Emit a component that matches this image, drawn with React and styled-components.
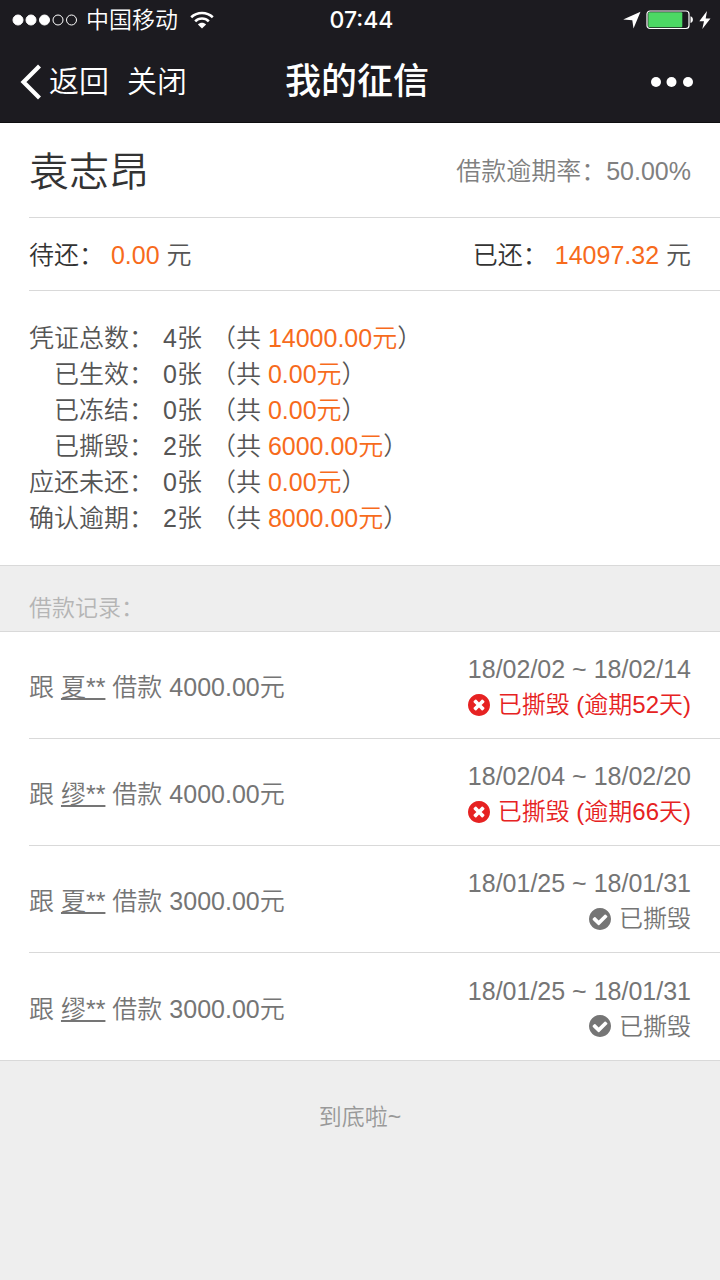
import React from 'react'
import styled, { createGlobalStyle } from 'styled-components'


const GlobalStyle = createGlobalStyle`
  * {
    box-sizing: border-box;
  }
  body {
    margin: 0;
    background: #eeeeee;
    color: #555555;
    font-family: "Liberation Sans", "Noto Sans CJK SC", sans-serif;
    font-size: 25px;
    font-weight: 350;
  }
`

const Header = styled.header`
  background: #1c1b20;
  color: #ffffff;
  border-bottom: 1px solid #0e0e10;
`

const StatusBar = styled.div`
  display: grid;
  grid-template-columns: 1fr auto 1fr;
  align-items: center;
  height: 40px;
  padding: 0 9px 0 12px;
  font-size: 23px;
  line-height: 40px;
`

const StatusSide = styled.div`
  display: flex;
  align-items: center;
  justify-content: ${props => props.$end ? 'flex-end' : 'flex-start'};
  gap: ${props => props.$end ? '5px' : '8px'};
`

const Carrier = styled.span`
  margin-right: 4px;
`

const Clock = styled.time`
  font-family: Inter, sans-serif;
  font-size: 23px;
  font-weight: 500;
`

const NavBar = styled.nav`
  display: grid;
  grid-template-columns: 1fr auto 1fr;
  align-items: center;
  height: 82px;
  padding: 2px 26px 0 20px;
`

const NavActions = styled.div`
  display: flex;
  align-items: center;
  gap: 18px;
`

const NavButton = styled.button`
  display: flex;
  align-items: center;
  justify-self: ${props => props.$end ? 'end' : 'start'};
  gap: 7px;
  padding: 0;
  border: 0;
  background: none;
  color: inherit;
  font: inherit;
  font-size: 30px;
  line-height: 40px;
`

const NavTitle = styled.h1`
  margin: 0;
  font-size: 36px;
  font-weight: 500;
  line-height: 48px;
`

const Panel = styled.section`
  background: #ffffff;
  border-bottom: 1px solid #d9d9d9;
  padding-left: 29px;
`

const PanelRow = styled.div`
  display: flex;
  align-items: center;
  justify-content: space-between;
  height: ${props => props.$tall ? '95px' : '73px'};
  padding: 0 29px 3px 0;
  border-bottom: 1px solid #d9d9d9;
`

const UserName = styled.h2`
  margin: 0;
  color: #333333;
  font-size: 40px;
  font-weight: inherit;
`

const OverdueRate = styled.span`
  color: #808080;
`

const Label = styled.span`
  color: #333333;
`

const Amount = styled.span`
  color: #f76b1c;
`

const Summary = styled.table`
  margin: 29px 0;
  border-collapse: collapse;
`

const SummaryLabel = styled.th`
  padding: 0;
  font-weight: inherit;
  line-height: 36px;
  text-align: right;
`

const SummaryCell = styled.td`
  padding: 0 0 0 9px;
  line-height: 36px;
`

const ListTitle = styled.h3`
  margin: 0;
  padding: 25px 29px 6px;
  border-bottom: 1px solid #d9d9d9;
  color: #b5b5b5;
  font-size: 23px;
  font-weight: inherit;
  line-height: 34px;
`

const RecordList = styled.ul`
  margin: 0;
  padding: 0 0 0 29px;
  list-style: none;
  background: #ffffff;
  border-bottom: 1px solid #d9d9d9;
`

const Record = styled.li`
  display: flex;
  align-items: center;
  justify-content: space-between;
  height: 107px;
  padding-right: 29px;
  color: #757575;
  border-bottom: 1px solid #d9d9d9;
  &:last-child {
    border-bottom: 0;
  }
`

const PersonLink = styled.a`
  color: inherit;
  text-decoration: underline;
  text-decoration-skip-ink: none;
`

const RecordDetail = styled.div`
  display: flex;
  flex-direction: column;
  align-items: flex-end;
  padding-top: 4px;
  line-height: 35px;
`

const RecordState = styled.span`
  display: flex;
  align-items: center;
  gap: 8px;
  font-size: 24px;
  color: ${props => props.$overdue ? '#e62222' : 'inherit'};
`

const ListEnd = styled.p`
  margin: 0;
  padding: 39px 0;
  color: #999999;
  font-size: 23px;
  line-height: 34px;
  text-align: center;
`

const SignalIcon = () =>
  <svg width="66" height="12" viewBox="0 0 66 12" fill="#fff" stroke="#fff">
    <circle cx="6" cy="6" r="5" />
    <circle cx="19" cy="6" r="5" />
    <circle cx="32.500" cy="6" r="5" />
    <circle cx="46" cy="6" r="5" fill="none" />
    <circle cx="59.500" cy="6" r="5" fill="none" />
  </svg>

const WifiIcon = () =>
  <svg width="24" height="18" viewBox="0 0 24 18" fill="none" stroke="#fff" strokeWidth="2.600">
    <path d="M1.200 6.200C7.200.6 16.800.6 22.800 6.200" />
    <path d="M5.200 10.400c3.800-3.800 9.800-3.800 13.600 0" />
    <path d="M12 17.500L7.900 13.400c2.300-2.200 5.900-2.200 8.200 0z" fill="#fff" stroke="none" />
  </svg>

const LocationIcon = () =>
  <svg width="18" height="18" viewBox="0 0 18 18" fill="#fff">
    <path d="M17.500 .8L10.500 17.500L9.300 9.300L.2 8.500z" />
  </svg>

const BatteryIcon = () =>
  <svg width="48" height="20" viewBox="0 0 48 20">
    <rect x="1" y="1" width="42" height="17.500" rx="3" fill="none" stroke="#fff" strokeWidth="1.200" />
    <rect x="2.300" y="2.300" width="34" height="15" rx="1" fill="#4cd964" />
    <path d="M44.500 6.300c3.200.6 3.200 6.200 0 6.800z" fill="#fff" />
  </svg>

const BoltIcon = () =>
  <svg width="12" height="18" viewBox="0 0 12 18" fill="#fff">
    <path d="M8 0L.3 10.300h4.700L3.300 18L11.500 7.400H6.700z" />
  </svg>

const BackIcon = () =>
  <svg width="22" height="36" viewBox="0 0 22 36" fill="none" stroke="#fff" strokeWidth="4.200">
    <path d="M19.500 2L3.500 18l16 16" />
  </svg>

const MoreIcon = () =>
  <svg width="44" height="12" viewBox="0 0 44 12" fill="#fff">
    <circle cx="6" cy="6" r="5" />
    <circle cx="21.500" cy="6" r="5" />
    <circle cx="38" cy="6" r="5" />
  </svg>

const CloseCircle = () =>
  <svg width="22" height="22" viewBox="0 0 1536 1536" fill="currentColor">
    <path d="M1149 994q0-26-19-45l-181-181 181-181q19-19 19-45 0-27-19-46l-90-90q-19-19-46-19-26 0-45 19l-181 181-181-181q-19-19-45-19-27 0-46 19l-90 90q-19 19-19 46 0 26 19 45l181 181-181 181q-19 19-19 45 0 27 19 46l90 90q19 19 46 19 26 0 45-19l181-181 181 181q19 19 45 19 27 0 46-19l90-90q19-19 19-46zm387-226q0 209-103 385.5t-279.5 279.5-385.5 103-385.5-103-279.5-279.5-103-385.5 103-385.5 279.5-279.5 385.5-103 385.5 103 279.5 279.5 103 385.5z" />
  </svg>

const CheckCircle = () =>
  <svg width="22" height="22" viewBox="0 0 1536 1536" fill="currentColor">
    <path d="M1284 606q0-28-18-46l-91-90q-19-19-45-19t-45 19l-408 407-226-226q-19-19-45-19t-45 19l-91 90q-18 18-18 46 0 27 18 45l362 362q19 19 45 19 27 0 46-19l543-543q18-18 18-45zm252 162q0 209-103 385.5t-279.5 279.5-385.5 103-385.5-103-279.5-279.5-103-385.5 103-385.5 279.5-279.5 385.5-103 385.5 103 279.5 279.5 103 385.5z" />
  </svg>

const summary = [
  { label: '凭证总数', count: 4, amount: '14000.00' },
  { label: '已生效', count: 0, amount: '0.00' },
  { label: '已冻结', count: 0, amount: '0.00' },
  { label: '已撕毁', count: 2, amount: '6000.00' },
  { label: '应还未还', count: 0, amount: '0.00' },
  { label: '确认逾期', count: 2, amount: '8000.00' }
]

const records = [
  { name: '夏**', amount: '4000.00', from: '18/02/02', to: '18/02/14', overdue: 52 },
  { name: '缪**', amount: '4000.00', from: '18/02/04', to: '18/02/20', overdue: 66 },
  { name: '夏**', amount: '3000.00', from: '18/01/25', to: '18/01/31', overdue: 0 },
  { name: '缪**', amount: '3000.00', from: '18/01/25', to: '18/01/31', overdue: 0 }
]

const App = () =>
  <div lang="zh-CN">
    <GlobalStyle />
    <Header>
      <StatusBar>
        <StatusSide>
          <SignalIcon />
          <Carrier>中国移动</Carrier>
          <WifiIcon />
        </StatusSide>
        <Clock>07:44</Clock>
        <StatusSide $end>
          <LocationIcon />
          <BatteryIcon />
          <BoltIcon />
        </StatusSide>
      </StatusBar>
      <NavBar>
        <NavActions>
          <NavButton type="button"><BackIcon />返回</NavButton>
          <NavButton type="button">关闭</NavButton>
        </NavActions>
        <NavTitle>我的征信</NavTitle>
        <NavButton type="button" $end aria-label="更多"><MoreIcon /></NavButton>
      </NavBar>
    </Header>
    <main>
      <Panel>
        <PanelRow $tall>
          <UserName>袁志昂</UserName>
          <OverdueRate>借款逾期率：50.00%</OverdueRate>
        </PanelRow>
        <PanelRow>
          <span><Label>待还：</Label> <Amount>0.00</Amount> 元</span>
          <span><Label>已还：</Label> <Amount>14097.32</Amount> 元</span>
        </PanelRow>
        <Summary>
          <tbody>
            {summary.map((item, index) => (
              <tr key={index}>
                <SummaryLabel scope="row">{item.label}：</SummaryLabel>
                <SummaryCell>{item.count}张</SummaryCell>
                <SummaryCell>（共 <Amount>{item.amount}元</Amount>）</SummaryCell>
              </tr>
            ))}
          </tbody>
        </Summary>
      </Panel>
      {/*借款记录*/}
      <ListTitle>借款记录：</ListTitle>
      <RecordList>
        {records.map((record, index) => (
          <Record key={index}>
            <span>跟 <PersonLink href="#">{record.name}</PersonLink> 借款 {record.amount}元</span>
            <RecordDetail>
              <span>{record.from} ~ {record.to}</span>
              <RecordState $overdue={record.overdue > 0}>
                {record.overdue > 0 ? <CloseCircle /> : <CheckCircle />}
                <span>已撕毁{record.overdue > 0 && ` (逾期${record.overdue}天)`}</span>
              </RecordState>
            </RecordDetail>
          </Record>
        ))}
      </RecordList>
      <ListEnd>到底啦~</ListEnd>
    </main>
  </div>

export default App
